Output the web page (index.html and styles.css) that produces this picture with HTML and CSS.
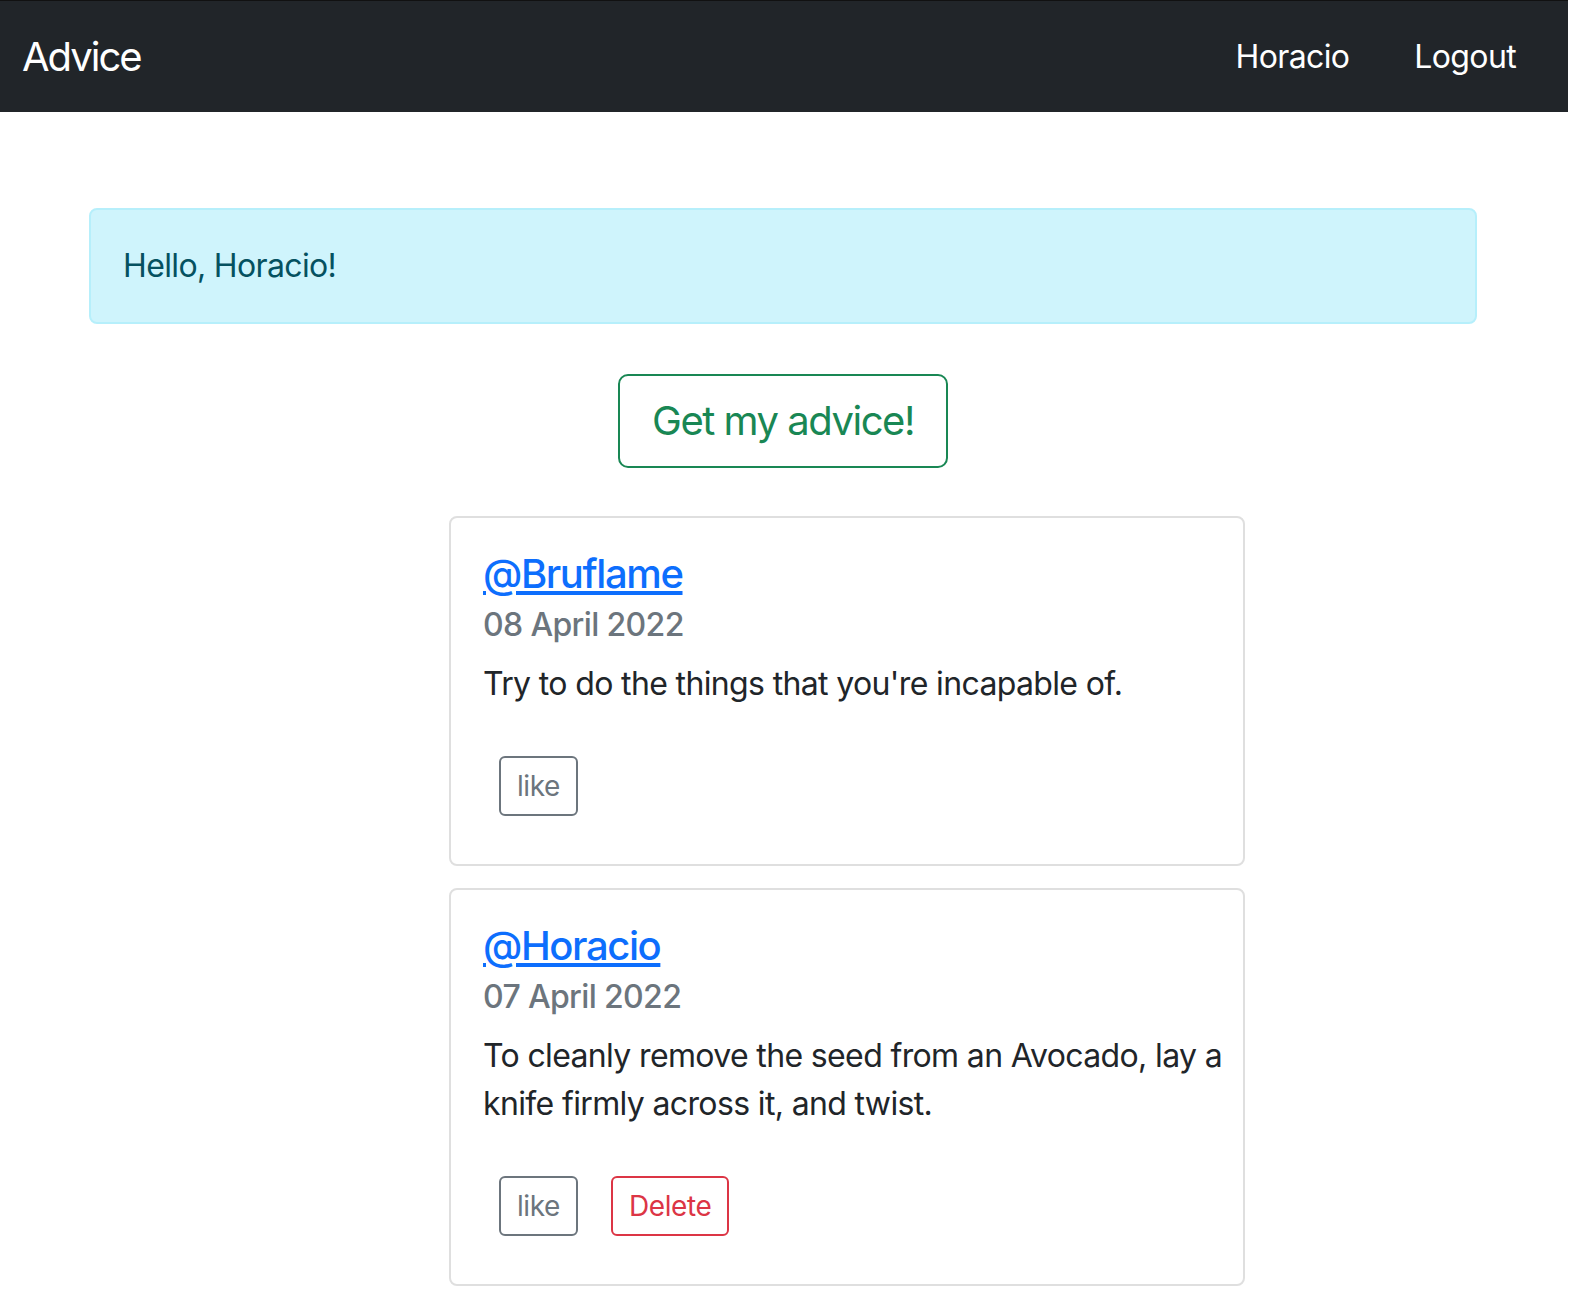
FILE: index.html
```html
<!DOCTYPE html>
<html lang="en">
<head>
<meta charset="utf-8">
<title>Advice</title>
<link rel="stylesheet" href="styles.css">
</head>
<body>
<div class="page">
  <nav class="navbar">
    <a class="brand" href="#">Advice</a>
    <div class="nav-links">
      <a class="nav-link" href="#">Horacio</a>
      <a class="nav-link" href="#">Logout</a>
    </div>
  </nav>
  <main class="container">
    <div class="alert">Hello, Horacio!</div>
    <div class="center">
      <button class="btn btn-lg btn-success">Get my advice!</button>
    </div>
    <div class="cards">
      <div class="card">
        <div class="card-body">
          <h5 class="card-title"><a href="#">@Bruflame</a></h5>
          <h6 class="card-subtitle">08 April 2022</h6>
          <p class="card-text">Try to do the things that you're incapable of.</p>
          <div class="actions">
            <button class="btn btn-sm btn-secondary">like</button>
          </div>
        </div>
      </div>
      <div class="card">
        <div class="card-body">
          <h5 class="card-title"><a href="#">@Horacio</a></h5>
          <h6 class="card-subtitle">07 April 2022</h6>
          <p class="card-text">To cleanly remove the seed from an Avocado, lay a knife firmly across it, and twist.</p>
          <div class="actions">
            <button class="btn btn-sm btn-secondary">like</button>
            <button class="btn btn-sm btn-danger">Delete</button>
          </div>
        </div>
      </div>
    </div>
  </main>
</div>
</body>
</html>
```
FILE: styles.css
```css
* { box-sizing: border-box; }
html, body { margin: 0; padding: 0; background: #fff; }
body {
  font-family: Inter, "Liberation Sans", sans-serif;
  font-size: 32px;
  line-height: 1.5;
  letter-spacing: -0.02em;
  color: #212529;
}
.page { width: 1568px; }
.navbar {
  display: flex;
  align-items: center;
  justify-content: space-between;
  background: #212529;
  height: 112px;
  padding: 0 36px 0 22px;
  border-top: 1px solid #111;
}
.brand {
  color: #fff;
  text-decoration: none;
  font-size: 40px;
  line-height: 60px;
  letter-spacing: -0.05em;
}
.nav-links { display: flex; gap: 33px; }
.nav-link {
  color: #fff;
  text-decoration: none;
  font-size: 32px;
  line-height: 48px;
  padding: 0 16px;
}
.container {
  width: 1388px;
  margin: 0 0 0 89px;
  padding-top: 96px;
}
.alert {
  background: #cff4fc;
  border: 2px solid #b6effb;
  color: #055160;
  border-radius: 8px;
  padding: 32px 32px;
  line-height: 48px;
}
.center { display: flex; justify-content: center; margin-top: 50px; }
.btn {
  font-family: inherit;
  background: #fff;
  border: 2px solid;
  cursor: pointer;
}
.btn-lg {
  font-size: 40px;
  letter-spacing: -0.037em;
  line-height: 58px;
  padding: 16px 32px;
  border-radius: 10px;
}
.btn-sm {
  font-size: 28px;
  letter-spacing: -0.015em;
  line-height: 40px;
  padding: 8px 16px;
  border-radius: 6px;
  margin: 16px;
}
.btn-success { color: #198754; border-color: #198754; }
.btn-secondary { color: #6c757d; border-color: #6c757d; }
.btn-danger { color: #dc3545; border-color: #dc3545; }
.cards {
  margin-top: 48px;
  margin-left: 360px;
  width: 796px;
  display: flex;
  flex-direction: column;
  gap: 22px;
}
.card {
  border: 2px solid #dfdfdf;
  border-radius: 8px;
}
.card-body { padding: 32px; }
.card-title {
  margin: 0 0 16px;
  font-size: 40px;
  font-weight: 500;
  line-height: 48px;
  letter-spacing: -0.035em;
}
.card-title a { color: #0d6efd; text-decoration: underline; text-underline-offset: 3px; }
.card-subtitle {
  margin: -8px 0 16px;
  font-size: 32px;
  font-weight: 500;
  line-height: 38px;
  color: #6c757d;
}
.card-text { margin: 0 -14px 32px 0; line-height: 48px; }
.actions { display: flex; gap: 1px; }
```
